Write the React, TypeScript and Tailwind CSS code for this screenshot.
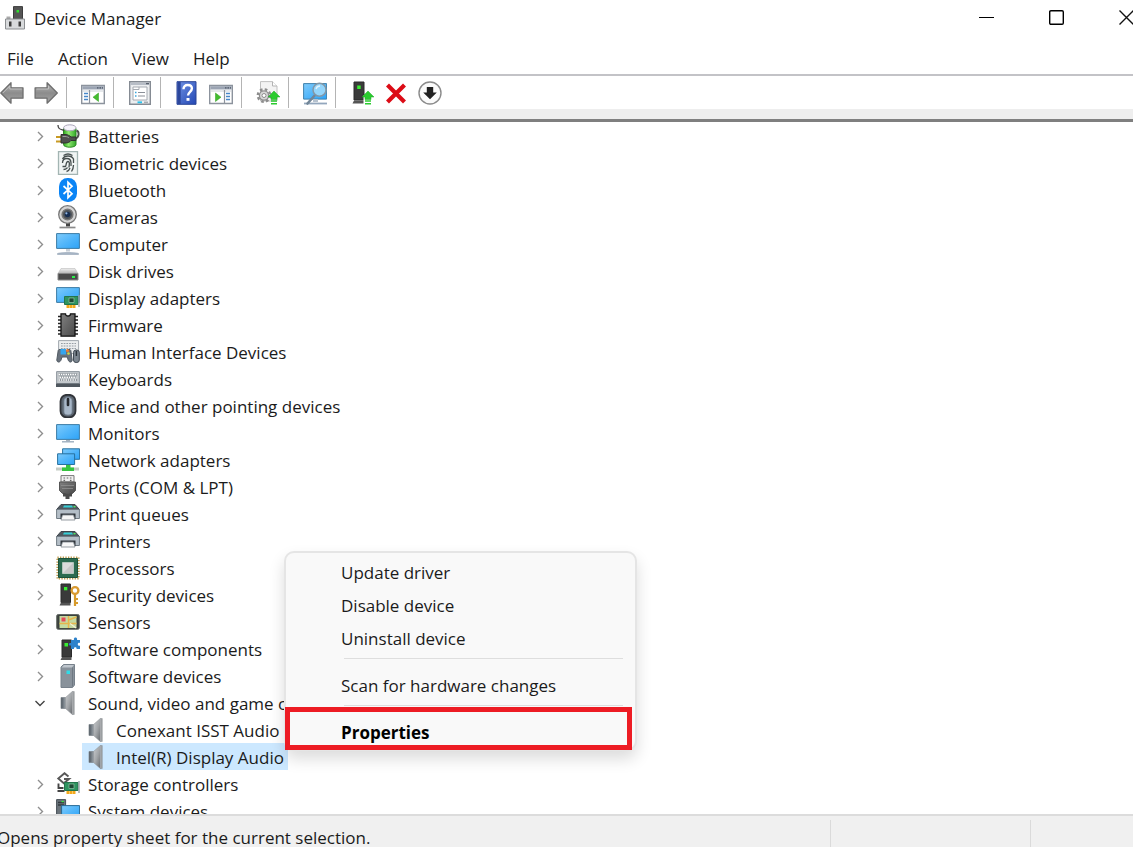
import type { ReactNode } from "react";

type IconProps = { children: ReactNode };

function Icon({ children }: IconProps) {
  return (
    <svg viewBox="0 0 24 24" className="size-6 shrink-0" fill="none" aria-hidden="true">
      {children}
    </svg>
  );
}

/* Shared gradients, referenced by id from the icons */
function Gradients() {
  return (
    <svg className="absolute size-0" aria-hidden="true">
      <defs>
        <linearGradient id="screen" x1="0" y1="0" x2="1" y2="1">
          <stop offset="0" stopColor="#7fcbfb" />
          <stop offset="0.5" stopColor="#52b6fa" />
          <stop offset="1" stopColor="#2ea3f7" />
        </linearGradient>
        <linearGradient id="arrow" x1="0" y1="0" x2="0" y2="1">
          <stop offset="0" stopColor="#b9b9b9" />
          <stop offset="0.5" stopColor="#8c8c8c" />
          <stop offset="1" stopColor="#a5a5a5" />
        </linearGradient>
        <linearGradient id="cone" x1="0" y1="0" x2="1" y2="1">
          <stop offset="0" stopColor="#c9cccf" />
          <stop offset="0.5" stopColor="#a3a6a9" />
          <stop offset="1" stopColor="#63676b" />
        </linearGradient>
        <linearGradient id="magnet" x1="0" y1="0" x2="1" y2="0">
          <stop offset="0" stopColor="#4d565e" />
          <stop offset="1" stopColor="#98a0a7" />
        </linearGradient>
        <linearGradient id="drive" x1="0" y1="0" x2="0" y2="1">
          <stop offset="0" stopColor="#f0f0f0" />
          <stop offset="1" stopColor="#b4b4b4" />
        </linearGradient>
        <linearGradient id="dark" x1="0" y1="0" x2="1" y2="1">
          <stop offset="0" stopColor="#808080" />
          <stop offset="1" stopColor="#4a4a4a" />
        </linearGradient>
        <linearGradient id="help" x1="0" y1="0" x2="1" y2="1">
          <stop offset="0" stopColor="#6f92e4" />
          <stop offset="1" stopColor="#2347b4" />
        </linearGradient>
        <linearGradient id="battery" x1="0" y1="0" x2="1" y2="0">
          <stop offset="0" stopColor="#2ea11f" />
          <stop offset="0.4" stopColor="#8eea6e" />
          <stop offset="1" stopColor="#35a82b" />
        </linearGradient>
      </defs>
    </svg>
  );
}

function UpArrow() {
  return (
    <>
      <path d="M18 10l6 6h-3v2.500h-6V16h-3z" fill="#2bcb2f" stroke="#1fa824" strokeWidth="0.500" />
      <path d="M15 20h6M15 22.800h6" stroke="#2bcb2f" strokeWidth="1.600" />
    </>
  );
}

function Board() {
  return (
    <>
      <path d="M8.500 10.500H22v8H8.500z" fill="#2f9460" stroke="#24754c" />
      <path d="M13 12h5v4.500h-5z" fill="#1d4934" stroke="#8fc3a5" strokeWidth="0.700" />
      <path d="M23 9v12" stroke="#9aa2a7" strokeWidth="1.400" />
      <path d="M10.500 19h9v3h-9z" fill="#f3a81c" />
      <path d="M13.500 19v3M16.500 19v3" stroke="#fbd886" strokeWidth="0.700" />
    </>
  );
}

/* Toolbar icons */

const backArrow = (
  <Icon>
    <path d="M.8 12L11 1.800v5h12v10.400H11v5z" fill="url(#arrow)" stroke="#6e6e6e" strokeWidth="1.300" strokeLinejoin="round" />
    <path d="M2.800 12L9.800 5v3h12" stroke="#c8c8c8" strokeWidth="0.800" />
  </Icon>
);

const forwardArrow = (
  <Icon>
    <path d="M23.300 12L13.100 1.800v5h-12v10.400h12v5z" fill="url(#arrow)" stroke="#6e6e6e" strokeWidth="1.300" strokeLinejoin="round" />
    <path d="M2.500 8h12V5" stroke="#c8c8c8" strokeWidth="0.800" />
  </Icon>
);

function PaneIcon({ flip = false }: { flip?: boolean }) {
  return (
    <Icon>
      <path d="M.7 4.500h22.600v18H.7z" fill="#fff" stroke="#8c939d" strokeWidth="1.400" />
      <path d="M1.400 5.200h21.200v3.300H1.400z" fill="#9ba4b3" />
      <path d="M16 6.800h1.500M18.500 6.800H20M21 6.800h1" stroke="#4c5566" strokeWidth="1.300" />
      <path d="M1.400 10h21.200" stroke="#ccd1d8" />
      <g transform={flip ? "translate(24 0) scale(-1 1)" : undefined}>
        <path d="M8.500 9v13" stroke="#8c939d" strokeWidth="1.200" />
        <path d="M3 12.500h4M3 15.500h4M3 18.500h4" stroke="#4787c9" strokeWidth="1.500" />
        <path d="M17.500 12v8.500L12 16.200z" fill="#43bd2f" stroke="#2e9a1d" strokeWidth="0.500" />
      </g>
    </Icon>
  );
}

const sheetIcon = (
  <Icon>
    <path d="M1.700.7h20.600v22.600H1.700z" fill="#eceef0" stroke="#858b93" strokeWidth="1.400" />
    <path d="M2.500 1.500h19v2.500h-19z" fill="#b7bdc6" />
    <path d="M18 2.600h3" stroke="#59616e" strokeWidth="1.300" />
    <path d="M5 6h14v13H5z" fill="#fff" stroke="#a6abb2" />
    <path d="M5 8.500h6V6" stroke="#a6abb2" />
    <path d="M7 11.500h1.500M7 15h1.500" stroke="#3aa7dd" strokeWidth="1.400" />
    <path d="M10 11.500h7M10 15h7" stroke="#8b9098" strokeWidth="1.200" />
    <path d="M9.500 21.300H14" stroke="#28c3ee" strokeWidth="1.800" />
    <path d="M16 21.300h4" stroke="#a6abb2" strokeWidth="1.500" />
  </Icon>
);

const helpIcon = (
  <Icon>
    <path d="M2 .7h19v22.600H2z" fill="url(#help)" stroke="#2a4596" />
    <path d="M2.500 1h3.200v22H2.500z" fill="#2c479c" />
    <path d="M8.500 8.200C8.500 5.300 10.200 4 12.700 4c2.600 0 4.200 1.400 4.200 3.600 0 3-3.900 3.600-3.900 7" stroke="#fff" strokeWidth="2.400" />
    <path d="M11.500 17h3v2.800h-3z" fill="#fff" />
  </Icon>
);

const updateIcon = (
  <Icon>
    <path d="M4.500.6h12l4.500 4.500V20H4.500z" fill="#f3f3f3" stroke="#c0c0c0" />
    <path d="M16.500.6V5H21" fill="#fff" stroke="#b3b3b3" />
    <circle cx="8" cy="14.500" r="6.200" stroke="#8d8d8d" strokeWidth="2.400" strokeDasharray="2.600 2.270" />
    <circle cx="8" cy="14.500" r="4.600" fill="#d8d8d8" stroke="#8d8d8d" strokeWidth="1.300" />
    <circle cx="8" cy="14.500" r="2" fill="#fff" stroke="#8d8d8d" />
    <UpArrow />
  </Icon>
);

const scanIcon = (
  <Icon>
    <path d="M.6 2.600h23v15.500H.6z" fill="url(#screen)" stroke="#3f82ad" />
    <path d="M10 18h5v3h-5z" fill="#b6c2cf" />
    <path d="M1 22.500h23" stroke="#93a7bd" strokeWidth="1.800" />
    <path d="M12.500 13.500L4.500 22.500" stroke="#728698" strokeWidth="2.600" strokeLinecap="round" />
    <circle cx="16.500" cy="8.800" r="6.500" fill="#94d5fb" stroke="#8397a6" strokeWidth="1.500" />
    <path d="M13 8c.5-2 2-3 4-3" stroke="#dff4ff" strokeWidth="1.300" />
  </Icon>
);

const enableIcon = (
  <Icon>
    <path d="M4 1h10v18H4z" fill="#3b3b3b" stroke="#2a2a2a" />
    <path d="M7.200 4.500h3.500V8H7.200z" fill="#38ef31" />
    <path d="M2.500 22.500L4 19.500h10v3z" fill="#555" />
    <path d="M13.500 14h3v9h-3z" fill="#fff" />
    <UpArrow />
  </Icon>
);

const removeIcon = (
  <Icon>
    <path d="M3.500 4l17 17M20.500 4l-17 17" stroke="#dc0c16" strokeWidth="4.200" />
  </Icon>
);

const disableIcon = (
  <Icon>
    <circle cx="12" cy="12" r="11" fill="#fafafa" stroke="#8b8b8b" strokeWidth="1.400" />
    <path d="M8.800 6h6.400v5.500h3.600L12 18.300 5.200 11.500h3.600z" fill="#1f1f1f" />
  </Icon>
);

/* Tree icons */

const batteries = (
  <Icon>
    <path d="M7.500 4.500v16c0 3.600 12.500 3.600 12.500 0v-16z" fill="url(#battery)" stroke="#2c8a22" />
    <ellipse cx="13.800" cy="3.800" rx="6.200" ry="3" fill="#f6f4fb" stroke="#aaa5b8" />
    <path d="M2 1c0 4 2 4 6 5.500" stroke="#444" strokeWidth="1.300" />
    <path d="M19 14.500c4.500-.5 4.500-7 1.500-8" stroke="#505050" strokeWidth="1.900" />
    <path d="M0 13h6M0 17.500h6" stroke="#c89a24" strokeWidth="2" />
    <path d="M5 10.500h4c3 0 5 1.500 6 2.500h5v3.500h-5c-1 1.500-3 2.500-6 2.500H5z" fill="#4f4f4f" stroke="#303030" />
    <path d="M6.500 12.500H9c2 0 3 .6 4 1.400" stroke="#9b9b9b" />
  </Icon>
);

const biometric = (
  <Icon>
    <path d="M2.500.7h19v22.600h-19z" fill="#f1f5f4" stroke="#a3b5b3" strokeWidth="1.300" />
    <path d="M7.500 4.500c3-2 6-2 9 0M6.500 8c2-4 9-4 11 0v4M6.500 12c0-6 8.500-6 8.500 0v3M6.500 15.500h3c1-1 .2-5 2.500-5s1 4 1 6M17.500 14c0 3-1 5-2 6.500M7.500 18.500c3 0 3-1 4-2M10.500 20.500c2-.5 3-2 3.500-3.500" stroke="#474f4f" strokeWidth="1.300" />
  </Icon>
);

const bluetooth = (
  <Icon>
    <rect x="3" width="18" height="24" rx="8.500" fill="#0a84f5" />
    <path d="M7.500 8l8.500 7.700-4 4V4.300l4 4L7.500 16" stroke="#fff" strokeWidth="1.700" />
  </Icon>
);

const camera = (
  <Icon>
    <path d="M10 18h4v3.500h-4z" fill="#444" />
    <path d="M3.500 22.500h16" stroke="#8a8a8a" strokeWidth="1.700" />
    <circle cx="11.500" cy="9.500" r="8.800" fill="#d5d5d5" stroke="#777" strokeWidth="1.300" />
    <circle cx="11.500" cy="9.500" r="5.300" fill="#4e5359" stroke="#777" strokeWidth="1.600" />
    <circle cx="11.500" cy="9.500" r="2.800" fill="#172d50" />
    <circle cx="10.400" cy="8.300" r="1.100" fill="#93b8e6" />
  </Icon>
);

const computer = (
  <Icon>
    <path d="M.6 1.600h22.800v14.800H.6z" fill="url(#screen)" stroke="#3c7ca6" />
    <path d="M10 17h4v2.500h-4z" fill="#c7cfd7" />
    <path d="M1.500 21.500c3-1.300 18-1.300 21 0v1h-21z" fill="#a8b6c6" stroke="#95a5b7" strokeWidth="0.600" />
  </Icon>
);

const disk = (
  <Icon>
    <path d="M5 9.500h14l3 5H2z" fill="url(#drive)" stroke="#bbb" strokeWidth="0.600" />
    <path d="M2 14.500h20V21H2z" fill="#4a4a4a" stroke="#888" />
    <path d="M16 17h3v2h-3z" fill="#2bf04b" />
  </Icon>
);

const display = (
  <Icon>
    <path d="M.6 1.600h22.800v14.800H.6z" fill="url(#screen)" stroke="#3c7ca6" />
    <Board />
  </Icon>
);

const firmware = (
  <Icon>
    <path d="M2 3.500h20M2 7h20M2 10.500h20M2 14h20M2 17.500h20M2 21h20" stroke="#222" strokeWidth="1.700" />
    <path d="M5 .8h4.500c0 3 5 3 5 0H19v22.400H5z" fill="url(#dark)" stroke="#141414" strokeWidth="1.300" />
  </Icon>
);

const hid = (
  <Icon>
    <path d="M2.600.6h20v13h-20z" fill="#eceeef" stroke="#a0a7ae" />
    <path d="M5 3.500h15M5 6h15M5 8.500h15" stroke="#969da4" strokeWidth="1.200" strokeDasharray="1.700 1" />
    <path d="M.8 20l1.400-9.500c.5-1.500 3-1.500 4 0h4.600c1-1.500 3.500-1.500 4 0L16.200 20c-.3 3-3.200 2.500-4 0l-1-3H6l-1 3c-.8 2.500-3.900 3-4.200 0z" fill="#69727c" stroke="#515a63" />
    <path d="M4.500 9h5.500v5.500H4.500z" fill="#35a5ee" />
    <circle cx="11.500" cy="10.500" r="1.600" fill="#ef7b32" />
    <circle cx="12.500" cy="13.500" r="1.300" fill="#c9d94a" />
    <rect x="17.500" y="10" width="5.800" height="12.500" rx="2.500" fill="#7c8690" stroke="#414a54" />
    <path d="M20.400 11v5" stroke="#2c333b" strokeWidth="1.500" />
  </Icon>
);

const keyboard = (
  <Icon>
    <path d="M.6 4.600h22.800v12H.6z" fill="#c3c8cc" stroke="#8f979e" />
    <path d="M2.500 7.500h19M3.500 10.200h17M2.500 13h19" stroke="#707980" strokeWidth="1.800" />
    <path d="M2.500 7.500h19M3.500 10.200h17M2.500 13h19" stroke="#fff" strokeWidth="1.500" strokeDasharray="1.600 0.700" />
    <path d="M0 16.500h24V20H0z" fill="#4f575e" />
  </Icon>
);

const mouse = (
  <Icon>
    <rect x="4.500" y=".8" width="15" height="22.600" rx="6.500" fill="#5b6570" stroke="#303338" strokeWidth="1.800" />
    <path d="M8 7c0-5 8-5 8 0v11c0 4-8 4-8 0z" fill="#a8b7c8" stroke="#7f8d9c" strokeWidth="0.800" />
    <path d="M12 5v6" stroke="#26292e" strokeWidth="2.600" strokeLinecap="round" />
  </Icon>
);

const monitor = (
  <Icon>
    <path d="M.6 3.600h22.800v14.800H.6z" fill="url(#screen)" stroke="#3c7ca6" />
    <path d="M10 19h4v1.500h-4z" fill="#a7b2bc" />
    <path d="M6 20.800h12" stroke="#9daebf" strokeWidth="1.400" />
  </Icon>
);

const network = (
  <Icon>
    <path d="M6.600.8h17v10.500h-17z" fill="url(#screen)" stroke="#27719f" />
    <path d="M1.600 5.800h17v10.700h-17z" fill="url(#screen)" stroke="#27719f" />
    <path d="M0 21h23" stroke="#c5ccc5" strokeWidth="3" />
    <path d="M10 17h4.500v2.500H18v3.500H6v-3.500h4z" fill="#36c440" />
  </Icon>
);

const ports = (
  <Icon>
    <path d="M5 .6h13v6.500H5z" fill="#f1f1f1" stroke="#777" />
    <path d="M7.500 3h1.600M10.700 3h1.600M13.900 3h1.600M7.500 5.300h1.600M13.900 5.300h1.600" stroke="#666" strokeWidth="1.200" />
    <path d="M3.500 7h16v8.500l-3 3h-10l-3-3z" fill="url(#dark)" stroke="#555" />
    <path d="M7 18h2.500v3.500H7zM13.500 18H16v3.500h-2.500zM9.500 19h4v5h-4z" fill="#4a4a4a" />
    <path d="M5 10.500h13M6 13.500h11" stroke="#919191" strokeWidth="0.800" />
  </Icon>
);

const printer = (
  <Icon>
    <path d="M5 2.500h14l4.400 5H.6z" fill="#50585f" stroke="#3d444b" />
    <path d="M8 3.500h8l1 2H7z" fill="#35cfd7" />
    <path d="M17.500 4.700h2" stroke="#50ef62" strokeWidth="1.400" />
    <path d="M.6 7.500h22.800v9H.6z" fill="#b4bec7" stroke="#717b84" />
    <path d="M4.500 11.500h15v5.500h-15z" fill="#30353a" />
    <path d="M6.500 13h11l1.500 5H5z" fill="#f7f7f7" stroke="#7e868d" strokeWidth="0.800" />
  </Icon>
);

const processor = (
  <Icon>
    <rect x="1.400" y="1.400" width="21.200" height="21.200" stroke="#bd9a4d" strokeWidth="2" strokeDasharray="1.300 1.350" />
    <path d="M2.500 2.500h19v19h-19z" fill="#2c6b50" stroke="#1d533b" />
    <path d="M6.500 6.500h11v11h-11z" fill="#dcdcdc" stroke="#b5c7bd" />
    <path d="M7 17L17 7v10z" fill="#c8c8c8" />
  </Icon>
);

const security = (
  <Icon>
    <path d="M5 1h9.500v18.500H5z" fill="#3a3a3a" stroke="#2a2a2a" />
    <path d="M8 4h3.300v3.300H8z" fill="#38ef31" />
    <path d="M3.500 22.500L5 19.500h9.500v3z" fill="#555" />
    <path d="M19 11v12M19 16h3M19 20h3" stroke="#d79b2c" strokeWidth="2.200" />
    <circle cx="19" cy="7.500" r="3.400" fill="#fff" stroke="#d99a30" strokeWidth="2.400" />
  </Icon>
);

const sensors = (
  <Icon>
    <rect x=".7" y="4.500" width="22.600" height="14.800" rx="1.500" fill="#3b403d" stroke="#646a66" />
    <path d="M3.500 6h17v12h-17z" fill="#c5dba2" />
    <path d="M3.500 13.500h17M12.500 6v12M12.500 10l8-3" stroke="#e6b54b" strokeWidth="1.500" />
    <path d="M14 13.500l6 4.500" stroke="#f6f3d7" strokeWidth="1.200" />
    <path d="M5.500 7.500h4v4h-4z" fill="#e74a5a" />
  </Icon>
);

const swComponents = (
  <Icon>
    <path d="M6 3h9.500v17H6z" fill="#3a3a3a" stroke="#2a2a2a" />
    <path d="M8.500 6h3.500v3.500H8.500z" fill="#38ef31" />
    <path d="M4.500 23L6 20h9.500v3z" fill="#555" />
    <path d="M15 3h3c-1-3.500 4-3.500 3 0h3v3c-3-1-3 3.500 0 2.700V12h-3.500c.7-2.500-3-2.500-2.500 0h-3V8.500c-3 .5-3-3 0-2.500z" fill="#2d82cb" />
  </Icon>
);

const swDevices = (
  <Icon>
    <path d="M5 3l2.500-2.500h11V21L16.500 23.500H5z" fill="#89929b" stroke="#77818b" />
    <path d="M5.500 3.500H16l2-2.500H8z" fill="#bfc6cd" />
    <path d="M10.500 6.500h3.500V10h-3.500z" fill="#30dbe7" />
    <path d="M16.500 3.500v19" stroke="#6e7882" />
  </Icon>
);

const speaker = (
  <Icon>
    <path d="M5 6.500h4.500v11H5z" fill="url(#magnet)" stroke="#7c848b" strokeWidth="0.700" />
    <path d="M9.500 6.500L16.500.3v23.400L9.500 17.500z" fill="url(#cone)" stroke="#8d9195" strokeWidth="0.500" />
    <path d="M16.500.3h2v23.400h-2z" fill="#85898d" />
    <path d="M17 1v22" stroke="#c5c7c9" strokeWidth="0.700" />
  </Icon>
);

const storage = (
  <Icon>
    <path d="M12.500 4.500L8.500 1.200 2.300 6.500l5.500 4.700L13 7H8" stroke="#585858" strokeWidth="1.900" />
    <path d="M2.500 11.500v4.500h5M1.500 19h7" stroke="#444" strokeWidth="1.900" />
    <Board />
  </Icon>
);

const system = (
  <Icon>
    <path d="M.6.6h9V20h-9z" fill="#6b747b" stroke="#454e55" />
    <path d="M2 3.500h6M2 6h6" stroke="#343b40" strokeWidth="1.300" />
    <path d="M5.500 2.500h2.300" stroke="#39e64a" strokeWidth="1.400" />
    <path d="M5.600 6.600h18V20h-18z" fill="url(#screen)" stroke="#286a96" />
  </Icon>
);

const TREE: [string, ReactNode][] = [
  ["Batteries", batteries],
  ["Biometric devices", biometric],
  ["Bluetooth", bluetooth],
  ["Cameras", camera],
  ["Computer", computer],
  ["Disk drives", disk],
  ["Display adapters", display],
  ["Firmware", firmware],
  ["Human Interface Devices", hid],
  ["Keyboards", keyboard],
  ["Mice and other pointing devices", mouse],
  ["Monitors", monitor],
  ["Network adapters", network],
  ["Ports (COM & LPT)", ports],
  ["Print queues", printer],
  ["Printers", printer],
  ["Processors", processor],
  ["Security devices", security],
  ["Sensors", sensors],
  ["Software components", swComponents],
  ["Software devices", swDevices],
  ["Sound, video and game controllers", speaker],
  ["Storage controllers", storage],
  ["System devices", system],
];

const SOUND_DEVICES = ["Conexant ISST Audio", "Intel(R) Display Audio"];
const OPEN_GROUP = "Sound, video and game controllers";
const SELECTED = "Intel(R) Display Audio";

function TitleBar() {
  return (
    <header className="flex h-10 items-start justify-between overflow-hidden">
      <div className="flex h-9 items-center gap-2 pl-1">
        <svg viewBox="0 0 22 24" className="h-6 w-[22px]" fill="none" aria-hidden="true">
          <path d="M9.500.6h9V13h-9z" fill="#555" stroke="#3d3d3d" />
          <path d="M12.500 4h2.500v2.500h-2.500z" fill="#2fe02f" />
          <path d="M2.500 10.500h4v2.500h-4z" fill="#aaa" />
          <path d="M1.500 13h19v10h-19z" fill="#d8dadc" stroke="#8c8f92" />
          <path d="M5 15.500h2.500v5H5zM14.500 15.500H17v5h-2.500z" fill="#3d3d3d" />
        </svg>
        <h1>Device Manager</h1>
      </div>
      <div className="-mr-7 flex h-[35px]">
        <button aria-label="Minimize" className="flex w-[70px] items-center justify-center">
          <span className="h-px w-[15px] bg-black" />
        </button>
        <button aria-label="Maximize" className="flex w-[70px] items-center justify-center">
          <svg viewBox="0 0 15 15" className="size-[15px]" fill="none" aria-hidden="true">
            <rect x=".7" y=".7" width="13.600" height="13.600" rx="1.200" stroke="#000" strokeWidth="1.400" />
          </svg>
        </button>
        <button aria-label="Close" className="flex w-[70px] items-center justify-center">
          <svg viewBox="0 0 15 15" className="size-[15px]" aria-hidden="true">
            <path d="M.5.5l14 14M14.500.5l-14 14" stroke="#111" strokeWidth="1.400" />
          </svg>
        </button>
      </div>
    </header>
  );
}

function ToolButton({ label, children }: { label: string; children: ReactNode }) {
  return (
    <button aria-label={label} title={label} className="size-6 shrink-0">
      {children}
    </button>
  );
}

function Divider() {
  return <span className="ml-2 mr-3.5 h-[31px] w-px bg-[#b4b4b4]" />;
}

function Toolbar() {
  return (
    <div role="toolbar" className="flex h-[35px] items-center border-t-2 border-[#c3c3c7]">
      <div className="flex gap-2.5">
        <ToolButton label="Back">{backArrow}</ToolButton>
        <ToolButton label="Forward">{forwardArrow}</ToolButton>
      </div>
      <Divider />
      <ToolButton label="Show console tree"><PaneIcon /></ToolButton>
      <Divider />
      <ToolButton label="Properties sheet">{sheetIcon}</ToolButton>
      <Divider />
      <div className="flex gap-2.5">
        <ToolButton label="Help topics">{helpIcon}</ToolButton>
        <ToolButton label="Show action pane"><PaneIcon flip /></ToolButton>
      </div>
      <Divider />
      <ToolButton label="Update device driver">{updateIcon}</ToolButton>
      <Divider />
      <ToolButton label="Scan hardware">{scanIcon}</ToolButton>
      <Divider />
      <div className="flex gap-2.5">
        <ToolButton label="Enable">{enableIcon}</ToolButton>
        <ToolButton label="Uninstall">{removeIcon}</ToolButton>
        <ToolButton label="Disable">{disableIcon}</ToolButton>
      </div>
    </div>
  );
}

function Chevron({ open }: { open: boolean }) {
  return (
    <svg viewBox="0 0 12 12" className="size-3" fill="none" aria-hidden="true">
      {open ? (
        <path d="M1.500 4L6 8.500 10.500 4" stroke="#444" strokeWidth="1.400" />
      ) : (
        <path d="M4 2L8.500 6.500 4 11" stroke="#8f8f8f" strokeWidth="1.400" />
      )}
    </svg>
  );
}

function DeviceTree() {
  return (
    <ul role="tree" aria-label="Devices">
      {TREE.map(([name, icon]) => {
        const open = name === OPEN_GROUP;
        return (
          <li key={name} role="treeitem" aria-expanded={open} aria-selected={false}>
            <div className="flex h-[27px] items-center pl-[34px]">
              <button aria-label={`Toggle ${name}`} className="mr-2.5">
                <Chevron open={open} />
              </button>
              {icon}
              <span className="ml-2 whitespace-nowrap pt-0.5">{name}</span>
            </div>
            {open && (
              <ul role="group">
                {SOUND_DEVICES.map((device) => (
                  <li key={device} role="treeitem" aria-selected={device === SELECTED} className="flex pl-[82px]">
                    <div
                      className={`flex h-[27px] items-center gap-2 whitespace-nowrap pl-0.5 pr-1 ${
                        device === SELECTED ? "bg-[#cce8ff]" : ""
                      }`}
                    >
                      {speaker}
                      <span className="pt-0.5">{device}</span>
                    </div>
                  </li>
                ))}
              </ul>
            )}
          </li>
        );
      })}
    </ul>
  );
}

function MenuItem({ children }: { children: ReactNode }) {
  return (
    <button role="menuitem" className="block h-[33px] w-full pl-[55px] text-left">
      {children}
    </button>
  );
}

function MenuRule() {
  return <hr className="mb-2.5 ml-[58px] mr-3 mt-[3px] border-[#dedede]" />;
}

function ContextMenu() {
  return (
    <div
      role="menu"
      className="absolute left-[284px] top-[429px] w-[353px] rounded-[10px] border-2 border-[#e5e5e5] bg-[#f9f9f9] pt-[3px] shadow-[0_8px_16px_rgba(0,0,0,0.14)]"
    >
      <MenuItem>Update driver</MenuItem>
      <MenuItem>Disable device</MenuItem>
      <MenuItem>Uninstall device</MenuItem>
      <MenuRule />
      <MenuItem>Scan for hardware changes</MenuItem>
      <MenuRule />
      <MenuItem>
        <strong className="font-bold text-black">Properties</strong>
      </MenuItem>
      {/* Highlight frame over the default action */}
      <div className="pointer-events-none absolute -bottom-px -left-px right-[3px] h-[43px] border-5 border-[#ed1c24]" />
    </div>
  );
}

export default function App() {
  return (
    <div className="flex h-screen flex-col overflow-hidden bg-white font-['Open_Sans','Noto_Sans',sans-serif] text-[17px] leading-[27px] text-[#1b1b1b]">
      <Gradients />
      <TitleBar />
      <nav className="flex h-[34px] shrink-0 items-center gap-6 pl-[7px] pt-0.5">
        <button>File</button>
        <button>Action</button>
        <button>View</button>
        <button>Help</button>
      </nav>
      <Toolbar />
      <div className="h-[13px] shrink-0 border-b-3 border-[#7f7f7f] bg-[#eee]" />
      <main className="relative min-h-0 flex-1 overflow-hidden">
        <DeviceTree />
        <ContextMenu />
      </main>
      <footer className="flex h-[33px] shrink-0 border-t-2 border-[#dcdcdc] bg-[#f0f0f0]">
        <p className="-ml-[3px] flex-1 pt-2">Opens property sheet for the current selection.</p>
        <div className="mt-1 w-[200px] border-l border-[#dadada]" />
        <div className="mt-1 w-[103px] border-l border-[#dadada]" />
      </footer>
    </div>
  );
}
